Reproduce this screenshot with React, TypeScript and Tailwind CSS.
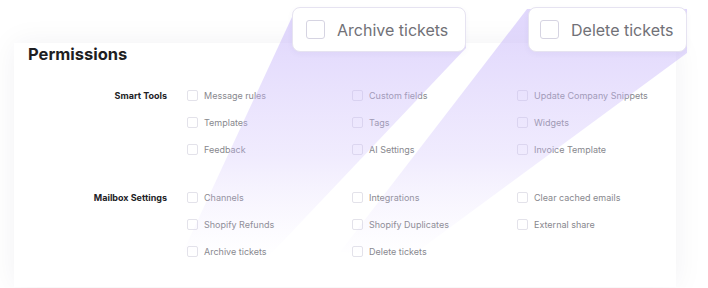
import { type FC } from 'react';

const SECTIONS = [
  {
    label: 'Smart Tools',
    items: [
      'Message rules',
      'Custom fields',
      'Update Company Snippets',
      'Templates',
      'Tags',
      'Widgets',
      'Feedback',
      'AI Settings',
      'Invoice Template',
    ],
  },
  {
    label: 'Mailbox Settings',
    items: [
      'Channels',
      'Integrations',
      'Clear cached emails',
      'Shopify Refunds',
      'Shopify Duplicates',
      'External share',
      'Archive tickets',
      'Delete tickets',
    ],
  },
];

const Item: FC<{ label: string }> = ({ label }) => (
  <div className="flex h-[27px] items-center gap-[6px]">
    <span className="size-[11px] shrink-0 rounded-[2px] border border-[#e3e2ea] bg-white" />
    <span className="text-[9px] text-[#88888e]">{label}</span>
  </div>
);

const Callout: FC<{ label: string; className: string }> = ({
  label,
  className,
}) => (
  <div
    className={`absolute top-[7px] flex h-[45px] items-center gap-[12px] rounded-[8px] border border-[#e6e3f1] bg-white shadow-[0_2px_6px_rgba(60,40,120,0.04)] ${className}`}
  >
    <span className="size-[19px] shrink-0 rounded-[3px] border border-[#d6d4e2] bg-white" />
    <span className="text-[16px] text-[#717177]">{label}</span>
  </div>
);

const Beams: FC = () => (
  <svg
    className="pointer-events-none absolute inset-0"
    width={708}
    height={288}
    viewBox="0 0 708 288"
  >
    <defs>
      <linearGradient id="beam" x1="0" y1="30" x2="0" y2="258" gradientUnits="userSpaceOnUse">
        <stop offset="0" stopColor="#c4b2fa" stopOpacity="0.5" />
        <stop offset="0.55" stopColor="#cdbdfb" stopOpacity="0.3" />
        <stop offset="1" stopColor="#ddd2fd" stopOpacity="0" />
      </linearGradient>
    </defs>
    <polygon points="292,17 466,17 466,48 268,257 183,252" fill="url(#beam)" />
    <polygon points="527,9 687,9 687,53 410,257 340,252" fill="url(#beam)" />
  </svg>
);

export default function App() {
  return (
    <div className="relative h-[288px] w-[708px] overflow-hidden bg-white font-['Inter',sans-serif]">
      <div className="h-full pb-[11px] pl-[14px] pr-[32px] pt-[33px]">
        <div className="h-full bg-white px-[14px] shadow-[0_0_28px_rgba(30,30,60,0.06)]">
          <h2 className="mt-[10px] text-[16.5px] font-bold leading-[22px] text-[#1e1e22]">
            Permissions
          </h2>
          <div className="mt-[17px] flex flex-col gap-[21px]">
            {SECTIONS.map(section => (
              <div key={section.label} className="flex">
                <div className="flex h-[27px] w-[139px] shrink-0 items-center justify-end text-[9px] font-bold text-[#222226]">
                  {section.label}
                </div>
                <div className="ml-[20px] grid grid-cols-[165px_165px_165px]">
                  {section.items.map(item => (
                    <Item key={item} label={item} />
                  ))}
                </div>
              </div>
            ))}
          </div>
        </div>
      </div>
      <Beams />
      <Callout label="Archive tickets" className="left-[292px] w-[174px] pl-[13px]" />
      <Callout label="Delete tickets" className="left-[528px] w-[159px] pl-[11px]" />
    </div>
  );
}
